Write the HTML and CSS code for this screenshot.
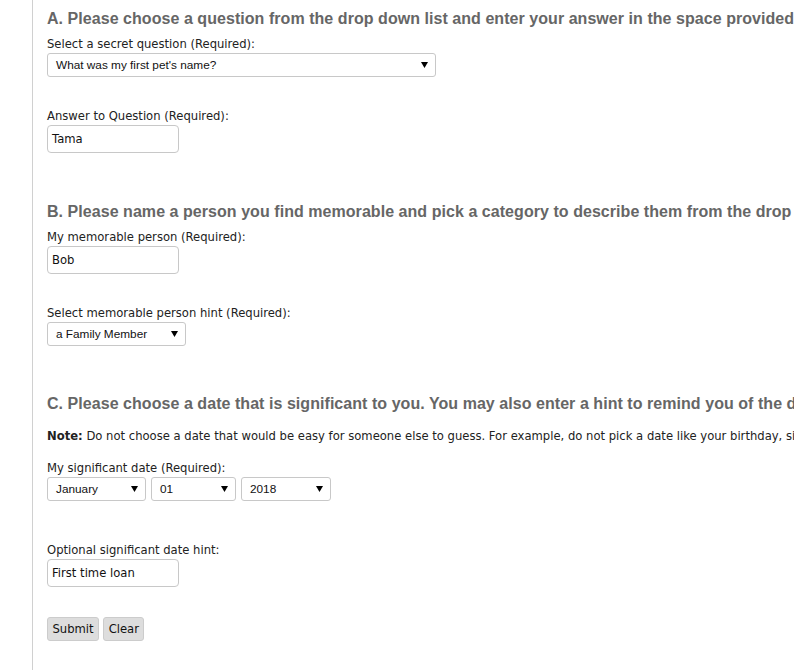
FILE: index.html
```html
<!DOCTYPE html>
<html>
<head>
<meta charset="utf-8">
<link rel="stylesheet" href="styles.css">
</head>
<body>
<div class="page">
  <form class="form">
    <section class="sec sec-a">
      <h2 class="heading">A. Please choose a question from the drop down list and enter your answer in the space provided</h2>
      <div class="field">
        <label class="label">Select a secret question (Required):</label>
        <div class="select w-question"><span>What was my first pet's name?</span><svg class="arrow" width="7" height="6" viewBox="0 0 7 6"><path d="M0 0H7L3.5 6Z"/></svg></div>
      </div>
      <div class="field gap">
        <label class="label">Answer to Question (Required):</label>
        <div class="input">Tama</div>
      </div>
    </section>

    <section class="sec sec-b">
      <h2 class="heading">B. Please name a person you find memorable and pick a category to describe them from the drop down list</h2>
      <div class="field">
        <label class="label">My memorable person (Required):</label>
        <div class="input">Bob</div>
      </div>
      <div class="field gap">
        <label class="label">Select memorable person hint (Required):</label>
        <div class="select w-hint"><span>a Family Member</span><svg class="arrow" width="7" height="6" viewBox="0 0 7 6"><path d="M0 0H7L3.5 6Z"/></svg></div>
      </div>
    </section>

    <section class="sec sec-c">
      <h2 class="heading">C. Please choose a date that is significant to you. You may also enter a hint to remind you of the date</h2>
      <p class="note"><b>Note:</b> Do not choose a date that would be easy for someone else to guess. For example, do not pick a date like your birthday, since it is easy to find.</p>
      <div class="field">
        <label class="label">My significant date (Required):</label>
        <div class="date-row">
          <div class="select w-month"><span>January</span><svg class="arrow" width="7" height="6" viewBox="0 0 7 6"><path d="M0 0H7L3.5 6Z"/></svg></div>
          <div class="select w-day"><span>01</span><svg class="arrow" width="7" height="6" viewBox="0 0 7 6"><path d="M0 0H7L3.5 6Z"/></svg></div>
          <div class="select w-year"><span>2018</span><svg class="arrow" width="7" height="6" viewBox="0 0 7 6"><path d="M0 0H7L3.5 6Z"/></svg></div>
        </div>
      </div>
      <div class="field gap-lg">
        <label class="label">Optional significant date hint:</label>
        <div class="input">First time loan</div>
      </div>
    </section>

    <div class="buttons">
      <button type="button" class="btn">Submit</button>
      <button type="button" class="btn">Clear</button>
    </div>
  </form>
</div>
</body>
</html>
```

FILE: styles.css
```css
html, body {
  margin: 0;
  padding: 0;
  background: #fff;
  overflow: hidden;
}
.page {
  margin-left: 32px;
  border-left: 1px solid #d0d0d0;
  min-height: 670px;
  padding-left: 14px;
  padding-top: 9px;
  font-family: "DejaVu Sans", Verdana, sans-serif;
  font-size: 11.6px;
  color: #222;
}
.form {
  display: flex;
  flex-direction: column;
}
.sec {
  display: flex;
  flex-direction: column;
}
.sec-b { margin-top: 49px; }
.sec-c { margin-top: 48px; }
.heading {
  margin: 0;
  font-family: "Liberation Sans", Arial, sans-serif;
  font-size: 16px;
  font-weight: bold;
  line-height: 20px;
  letter-spacing: 0.05px;
  color: #666;
  white-space: nowrap;
}
.field {
  display: flex;
  flex-direction: column;
  align-items: flex-start;
  margin-top: 7px;
}
.field.gap { margin-top: 31px; }
.field.gap-lg { margin-top: 41px; }
.label {
  line-height: 16px;
  margin-bottom: 1px;
}
.note {
  margin: 14px 0 0;
  line-height: 16px;
  white-space: nowrap;
}
.note + .field { margin-top: 16px; }
.select {
  box-sizing: border-box;
  height: 24px;
  border: 1px solid #c8c8c8;
  border-radius: 3px;
  display: flex;
  align-items: center;
  justify-content: space-between;
  padding: 0 7px 0 8px;
  font-family: "Liberation Sans", Arial, sans-serif;
  font-size: 11.8px;
  color: #111;
  background: #fff;
}
.arrow { fill: #000; }
.w-question { width: 389px; }
.w-hint { width: 139px; }
.w-month { width: 99px; }
.w-day { width: 85px; }
.w-year { width: 90px; }
.date-row {
  display: flex;
  gap: 5px;
}
.input {
  box-sizing: border-box;
  width: 132px;
  height: 28px;
  border: 1px solid #c8c8c8;
  border-radius: 4px;
  padding: 0 4px;
  display: flex;
  align-items: center;
  font-size: 11.6px;
  color: #111;
}
.buttons {
  display: flex;
  gap: 4px;
  margin-top: 30px;
}
.btn {
  height: 24px;
  padding: 0 4.5px;
  border: 1px solid #ccc;
  border-radius: 3px;
  background: #ddd;
  font-family: "DejaVu Sans", Verdana, sans-serif;
  font-size: 11.6px;
  color: #111;
}
```
